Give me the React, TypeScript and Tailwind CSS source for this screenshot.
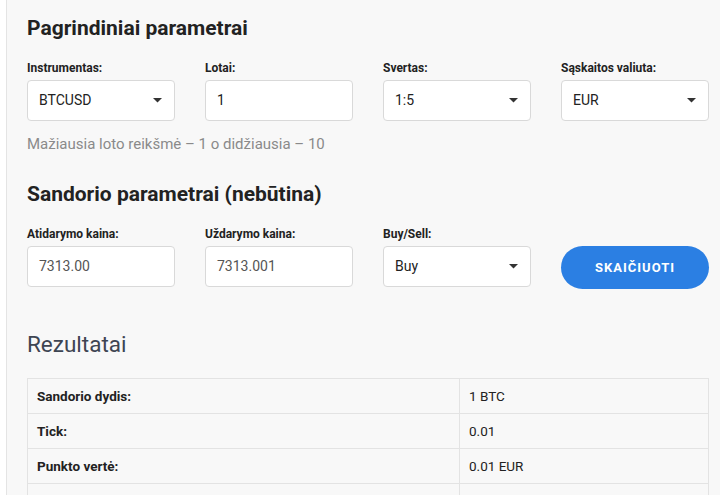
import { ReactNode } from 'react';

const font = { fontFamily: 'Roboto, "Noto Sans", sans-serif' };

function Caret() {
  return (
    <svg width="9" height="5" viewBox="0 0 9 5" className="shrink-0">
      <path d="M0 0 L9 0 L4.5 4.5 Z" fill="#333" />
    </svg>
  );
}

function Field({ label, children }: { label: string; children: ReactNode }) {
  return (
    <div className="flex flex-col">
      <label className="text-[12px] font-bold text-[#222] leading-[15px] mb-[4px]">{label}</label>
      {children}
    </div>
  );
}

function SelectBox({ value }: { value: string }) {
  return (
    <div className="h-[41px] bg-white border border-[#d9d9d9] rounded-[4px] flex items-center justify-between pl-[11px] pr-[12px] text-[14px] text-[#222]">
      <span>{value}</span>
      <Caret />
    </div>
  );
}

function InputBox({ value, muted }: { value: string; muted?: boolean }) {
  return (
    <div
      className={`h-[41px] bg-white border border-[#d9d9d9] rounded-[4px] flex items-center pl-[11px] text-[14px] ${
        muted ? 'text-[#555]' : 'text-[#222]'
      }`}
    >
      {value}
    </div>
  );
}

const rows = [
  ['Sandorio dydis:', '1 BTC'],
  ['Tick:', '0.01'],
  ['Punkto vertė:', '0.01 EUR'],
  ['', ''],
];

export default function App() {
  return (
    <div className="w-[720px] h-[495px] overflow-hidden bg-white pl-[6px]" style={font}>
      <div className="h-full border-l border-[#e4e4e4] bg-[#f8f8f8] pl-[20px] pr-[11px] pt-[14px]">
        <h2 className="text-[21px] font-bold text-[#222] leading-[28px]">Pagrindiniai parametrai</h2>

        <div className="grid grid-cols-4 gap-x-[30px] mt-[19px]">
          <Field label="Instrumentas:">
            <SelectBox value="BTCUSD" />
          </Field>
          <Field label="Lotai:">
            <InputBox value="1" />
          </Field>
          <Field label="Svertas:">
            <SelectBox value="1:5" />
          </Field>
          <Field label="Sąskaitos valiuta:">
            <SelectBox value="EUR" />
          </Field>
        </div>

        <p className="text-[15px] text-[#8a8a8a] mt-[14px] leading-[18px]">
          Mažiausia loto reikšmė – 1 o didžiausia – 10
        </p>

        <h2 className="text-[21px] font-bold text-[#222] leading-[28px] mt-[27px]">
          Sandorio parametrai (nebūtina)
        </h2>

        <div className="grid grid-cols-4 gap-x-[30px] mt-[19px] items-end">
          <Field label="Atidarymo kaina:">
            <InputBox value="7313.00" muted />
          </Field>
          <Field label="Uždarymo kaina:">
            <InputBox value="7313.001" muted />
          </Field>
          <Field label="Buy/Sell:">
            <SelectBox value="Buy" />
          </Field>
          <button className="h-[43px] rounded-full bg-[#2b7fe3] text-white text-[13px] font-bold tracking-[1px] mb-[-2px]">
            SKAIČIUOTI
          </button>
        </div>

        <h2 className="text-[22.5px] text-[#3e4553] leading-[28px] mt-[43px]">Rezultatai</h2>

        <table className="w-full mt-[20px] border-collapse text-[13.5px] text-[#222]">
          <tbody>
            {rows.map(([k, v], i) => (
              <tr key={i} className="h-[35px]">
                <td className="border border-[#e3e3e3] pl-[9px] font-bold w-[432px]">{k}</td>
                <td className="border border-[#e3e3e3] pl-[9px]">{v}</td>
              </tr>
            ))}
          </tbody>
        </table>
      </div>
    </div>
  );
}
